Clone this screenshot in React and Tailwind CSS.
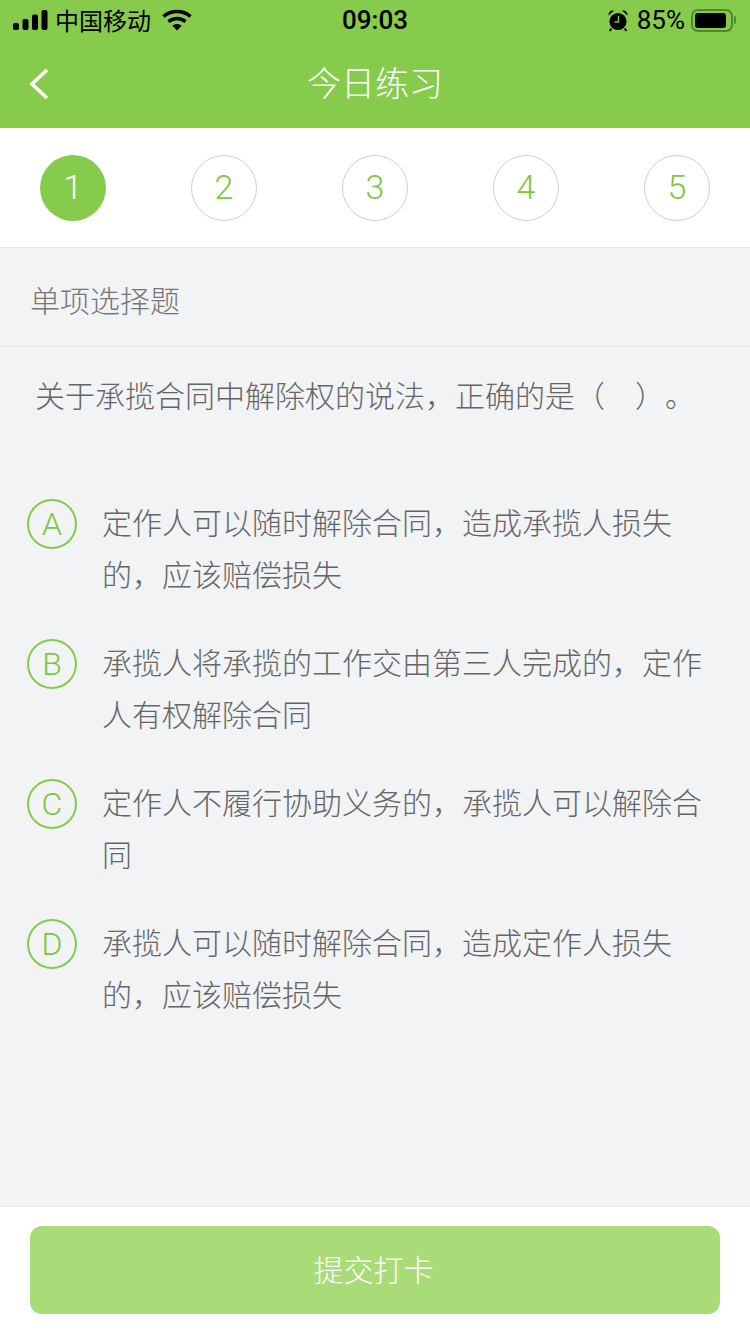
const cjk = { fontFamily: '"Noto Sans CJK SC", sans-serif' };
const ui = { fontFamily: 'Roboto, "Noto Sans CJK SC", sans-serif' };

const options = [
  ["A", "定作人可以随时解除合同\uFF0C造成承揽人损失的\uFF0C应该赔偿损失"],
  ["B", "承揽人将承揽的工作交由第三人完成的\uFF0C定作人有权解除合同"],
  ["C", "定作人不履行协助义务的\uFF0C承揽人可以解除合同"],
  ["D", "承揽人可以随时解除合同\uFF0C造成定作人损失的\uFF0C应该赔偿损失"],
];

function Signal() {
  return (
    <svg width="35" height="20" viewBox="0 0 35 20" fill="#000">
      <rect x="0" y="13" width="6" height="7" rx="2" />
      <rect x="9.5" y="9" width="6" height="11" rx="2" />
      <rect x="19" y="4.5" width="6" height="15.5" rx="2" />
      <rect x="28.5" y="0" width="6" height="20" rx="2" />
    </svg>
  );
}

function Wifi() {
  return (
    <svg width="30" height="22" viewBox="0 0 30 22" fill="none" stroke="#000" strokeWidth="3.6">
      <path d="M1.5 7.5C9 .8 21 .8 28.5 7.5" />
      <path d="M6.5 12.6C11.5 8.4 18.5 8.4 23.5 12.6" />
      <path d="M15 21.5L10.2 16.5C13 14.4 17 14.4 19.8 16.5Z" fill="#000" stroke="none" />
    </svg>
  );
}

function Alarm() {
  return (
    <svg width="22" height="23" viewBox="0 0 22 23">
      <circle cx="11" cy="12.5" r="8.6" fill="#000" />
      <path d="M1.5 6.5C1.2 3 4 .8 7 1.6ZM20.5 6.5C20.8 3 18 .8 15 1.6Z" fill="#000" />
      <path d="M4.5 19.5L2.5 22M17.5 19.5L19.5 22" stroke="#000" strokeWidth="2" />
      <path d="M11.5 7V13H7.5" fill="none" stroke="#85cc4b" strokeWidth="1.4" />
    </svg>
  );
}

function Battery() {
  return (
    <div className="flex items-center">
      <div className="flex h-[23px] w-[42px] items-center rounded-[7px] border-2 border-[#4f8a2c] p-[2px]">
        <div className="h-full w-[31px] rounded-[3px] bg-black" />
      </div>
      <div className="ml-[1px] h-[8px] w-[2px] rounded-r bg-[#4f8a2c]" />
    </div>
  );
}

export default function App() {
  return (
    <div lang="zh-CN" className="flex h-[1334px] w-[750px] flex-col overflow-hidden bg-[#f2f3f5] [text-spacing-trim:space-all]" style={cjk}>
      <div className="bg-[#86cb4c]">
        <div className="relative flex h-[40px] items-center justify-between pl-[13px] pr-[14px] text-black">
          <div className="flex items-center">
            <Signal />
            <span className="ml-[7px] text-[24px] leading-[40px]">中国移动</span>
            <span className="ml-[11px] flex"><Wifi /></span>
          </div>
          <div className="absolute left-0 right-0 text-center text-[26px] font-medium leading-[40px]" style={ui}>09:03</div>
          <div className="flex items-center">
            <Alarm />
            <span className="ml-[8px] text-[26px] leading-[40px]" style={ui}>85%</span>
            <span className="ml-[6px] flex"><Battery /></span>
          </div>
        </div>
        <div className="relative flex h-[88px] items-center justify-center pb-[4px]">
          <svg className="absolute left-[28px] top-[28px]" width="22" height="32" viewBox="0 0 22 32" fill="none" stroke="#fff" strokeWidth="3.6">
            <path d="M19 2L4 16L19 30" />
          </svg>
          <span className="text-[34px] font-light leading-none text-white">今日练习</span>
        </div>
      </div>

      <div className="flex h-[120px] items-center justify-between border-b border-[#e8e8e8] bg-white pl-[40px] pr-[40px]">
        {[1, 2, 3, 4, 5].map((n) => (
          <div
            key={n}
            className={
              n === 1
                ? "flex h-[66px] w-[66px] items-center justify-center rounded-full bg-[#86cb4c] text-[34px] font-light text-white"
                : "flex h-[66px] w-[66px] items-center justify-center rounded-full border border-[#cfcfcf] text-[34px] font-light text-[#7cc643]"
            }
            style={ui}
          >
            {n}
          </div>
        ))}
      </div>

      <div className="flex h-[99px] items-center border-b border-[#e6e7e9] pl-[30px] pt-[5px] text-[30px] font-light text-[#777777]">
        单项选择题
      </div>

      <div className="flex pl-[35px] pt-[21px] text-[30px] font-light leading-[52px] text-[#666666]">
        <span>{"关于承揽合同中解除权的说法\uFF0C正确的是\uFF08"}</span>
        <span className="w-[30px]" />
        <span>{"\uFF09\u3002"}</span>
      </div>

      <div className="mt-[79px] flex flex-col gap-[36px] pl-[27px]">
        {options.map(([letter, text]) => (
          <div key={letter} className="flex h-[104px] items-start">
            <div
              className="flex h-[50px] w-[50px] shrink-0 items-center justify-center rounded-full border-2 border-[#86cb4c] text-[32px] font-light text-[#7cc643]"
              style={ui}
            >
              {letter}
            </div>
            <div className="ml-[25px] mt-[-4px] w-[602px] text-[30px] font-light leading-[52px] text-[#666666]">{text}</div>
          </div>
        ))}
      </div>

      <div className="mt-auto flex h-[128px] border-t border-[#e9eaec] bg-white px-[30px] pt-[19px]">
        <div className="flex h-[88px] w-full items-center justify-center rounded-[12px] bg-[#a9dc78] pb-[4px] pr-[3px] text-[30px] font-light text-white">
          提交打卡
        </div>
      </div>
    </div>
  );
}
